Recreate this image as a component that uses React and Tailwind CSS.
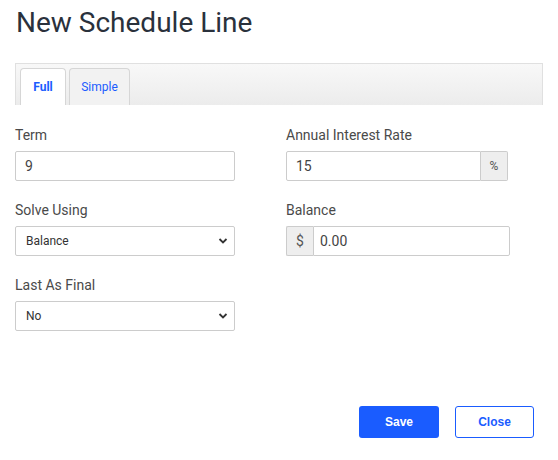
import React, { useState } from 'react';

function Chevron() {
  return (
    <svg width="10" height="10" viewBox="0 0 10 10" className="absolute right-[7px] top-[10px] pointer-events-none">
      <path d="M1.5 3 L5 6.5 L8.5 3" fill="none" stroke="#333" strokeWidth="1.8" />
    </svg>
  );
}

function App() {
  const [tab, setTab] = useState('full');
  const [term, setTerm] = useState('9');
  const [rate, setRate] = useState('15');
  const [balance, setBalance] = useState('0.00');
  const [solve, setSolve] = useState('Balance');
  const [last, setLast] = useState('No');

  const inputCls = "h-[30px] border border-[#ccc] rounded-[2px] px-[9px] text-[14px] text-[#444] outline-none bg-white";
  const selectCls = "h-[30px] w-full appearance-none border border-[#ccc] rounded-[2px] pl-[10px] text-[12px] text-[#333] bg-white outline-none";

  return (
    <div className="w-[558px] h-[460px] bg-white font-['Roboto',sans-serif] relative">
      {/* TITLE */}
      <h1 className="pl-[16px] pt-[8px] text-[28px] leading-[30px] text-[#2a313c] font-normal">New Schedule Line</h1>

      {/* TABS */}
      <div className="ml-[15px] mt-[25px] w-[528px] h-[42px] border border-[#e0e0e0] border-b-0 bg-gradient-to-b from-[#f8f8f8] to-[#ececec] flex items-end pl-[4px] gap-[3px]">
        <button onClick={() => setTab('full')} className={"h-[37px] w-[46px] rounded-t-[4px] border border-b-0 border-[#d6d6d6] text-[12px] text-[#1a5cff] " + (tab === 'full' ? 'bg-white font-bold' : 'bg-[#f2f2f2]')}>Full</button>
        <button onClick={() => setTab('simple')} className={"h-[37px] w-[61px] rounded-t-[4px] border border-b-0 border-[#d6d6d6] text-[12px] text-[#1a5cff] " + (tab === 'simple' ? 'bg-white font-bold' : 'bg-[#f2f2f2]')}>Simple</button>
      </div>

      {/* FORM */}
      <div className="pl-[15px] pt-[20px] grid grid-cols-[220px_224px] gap-x-[51px] gap-y-[19px]">
        <div>
          <label className="block text-[14px] leading-[20px] text-[#4a4a4a] mb-[6px]">Term</label>
          <input value={term} onChange={(e) => setTerm(e.target.value)} className={inputCls + " w-full"} />
        </div>
        <div>
          <label className="block text-[14px] leading-[20px] text-[#4a4a4a] mb-[6px]">Annual Interest Rate</label>
          <div className="flex w-[222px]">
            <input value={rate} onChange={(e) => setRate(e.target.value)} className={inputCls + " flex-1 min-w-0 rounded-r-none"} />
            <span className="w-[27px] h-[30px] border border-l-0 border-[#ccc] bg-[#eee] text-[12px] text-[#555] flex items-center justify-center rounded-r-[2px]">%</span>
          </div>
        </div>
        <div>
          <label className="block text-[14px] leading-[20px] text-[#4a4a4a] mb-[6px]">Solve Using</label>
          <div className="relative">
            <select value={solve} onChange={(e) => setSolve(e.target.value)} className={selectCls}>
              <option>Balance</option>
              <option>Payment</option>
              <option>Term</option>
            </select>
            <Chevron />
          </div>
        </div>
        <div>
          <label className="block text-[14px] leading-[20px] text-[#4a4a4a] mb-[6px]">Balance</label>
          <div className="flex w-[224px]">
            <span className="w-[27px] h-[30px] border border-r-0 border-[#ccc] bg-[#eee] text-[14px] text-[#555] flex items-center justify-center rounded-l-[2px]">$</span>
            <input value={balance} onChange={(e) => setBalance(e.target.value)} className={inputCls + " flex-1 min-w-0 rounded-l-none pl-[6px]"} />
          </div>
        </div>
        <div>
          <label className="block text-[14px] leading-[20px] text-[#4a4a4a] mb-[6px]">Last As Final</label>
          <div className="relative">
            <select value={last} onChange={(e) => setLast(e.target.value)} className={selectCls}>
              <option>No</option>
              <option>Yes</option>
            </select>
            <Chevron />
          </div>
        </div>
      </div>

      {/* FOOTER */}
      <div className="absolute left-0 right-[24px] top-[406px] flex justify-end gap-[16px]">
        <button className="w-[80px] h-[32px] rounded-[3px] bg-[#1a5cff] text-white text-[12px] font-bold font-['Liberation_Sans',sans-serif]">Save</button>
        <button className="w-[79px] h-[32px] rounded-[3px] border border-[#1a5cff] bg-white text-[#1a5cff] text-[12px] font-bold font-['Liberation_Sans',sans-serif]">Close</button>
      </div>
    </div>
  );
}

export default App;
